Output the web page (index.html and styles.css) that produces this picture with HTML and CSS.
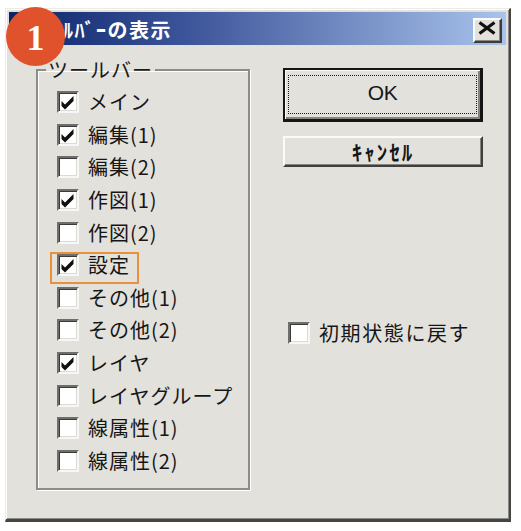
FILE: index.html
```html
<!DOCTYPE html>
<html lang="ja">
<head>
<meta charset="utf-8">
<title>ツールバーの表示</title>
<link rel="stylesheet" href="styles.css">
</head>
<body>
<div class="dialog">
  <div class="titlebar">
    <span class="title">ﾂｰﾙﾊﾞｰの表示</span>
    <div class="close"><svg width="25" height="21" viewBox="0 0 25 21"><path d="M4.5 2.5 L19.5 13.5 M19.5 2.5 L4.5 13.5" stroke="#111" stroke-width="3.2" fill="none"/></svg></div>
  </div>
  <div class="content">
    <fieldset class="group">
      <legend>ツールバー</legend>
      <div class="list">
        <div class="row"><span class="cb"><svg class="chk" viewBox="0 0 18 18"><polygon points="2.5,8 6,11.5 14.5,3 14.5,8 6,16.5 2.5,13"/></svg></span><span class="lbl">メイン</span></div>
        <div class="row"><span class="cb"><svg class="chk" viewBox="0 0 18 18"><polygon points="2.5,8 6,11.5 14.5,3 14.5,8 6,16.5 2.5,13"/></svg></span><span class="lbl">編集(1)</span></div>
        <div class="row"><span class="cb"></span><span class="lbl">編集(2)</span></div>
        <div class="row"><span class="cb"><svg class="chk" viewBox="0 0 18 18"><polygon points="2.5,8 6,11.5 14.5,3 14.5,8 6,16.5 2.5,13"/></svg></span><span class="lbl">作図(1)</span></div>
        <div class="row"><span class="cb"></span><span class="lbl">作図(2)</span></div>
        <div class="row"><span class="cb"><svg class="chk" viewBox="0 0 18 18"><polygon points="2.5,8 6,11.5 14.5,3 14.5,8 6,16.5 2.5,13"/></svg></span><span class="lbl">設定</span><span class="hl"></span></div>
        <div class="row"><span class="cb"></span><span class="lbl">その他(1)</span></div>
        <div class="row"><span class="cb"></span><span class="lbl">その他(2)</span></div>
        <div class="row"><span class="cb"><svg class="chk" viewBox="0 0 18 18"><polygon points="2.5,8 6,11.5 14.5,3 14.5,8 6,16.5 2.5,13"/></svg></span><span class="lbl">レイヤ</span></div>
        <div class="row"><span class="cb"></span><span class="lbl">レイヤグループ</span></div>
        <div class="row"><span class="cb"></span><span class="lbl">線属性(1)</span></div>
        <div class="row"><span class="cb"></span><span class="lbl">線属性(2)</span></div>
      </div>
    </fieldset>
    <div class="side">
      <div class="btn ok"><span class="focus">OK</span></div>
      <div class="btn cancel">ｷｬﾝｾﾙ</div>
      <div class="row reset"><span class="cb"></span><span class="lbl wide">初期状態に戻す</span></div>
    </div>
  </div>
  <div class="badge">1</div>
</div>
</body>
</html>
```

FILE: styles.css
```css
html, body {
  margin: 0;
  padding: 0;
  background: #ffffff;
}

body {
  font-family: "Noto Sans CJK JP", "Noto Sans", sans-serif;
  color: #161616;
}

.dialog {
  position: relative;
  margin: 8px 0 0 5px;
  width: 506px;
  height: 514px;
  box-sizing: border-box;
  background: #e3e1db;
  border-style: solid;
  border-width: 1px 2px 3px 1px;
  border-color: #ebeae5 #454543 #454543 #ebeae5;
  box-shadow: inset 1px 1px 0 #ffffff, inset -1px -1px 0 #8a8985;
  padding: 3px 3px 0 3px;
}

.titlebar {
  height: 33px;
  display: flex;
  align-items: center;
  justify-content: space-between;
  padding: 0 4px 0 31px;
  background: linear-gradient(to right, #0a246a 0%, #3b5398 35%, #a9c3ec 100%);
}

.title {
  color: #ffffff;
  font-weight: 700;
  font-size: 20px;
  letter-spacing: 1.5px;
  line-height: 1;
  margin-top: 2px;
}

.close {
  width: 29px;
  height: 25px;
  box-sizing: border-box;
  align-self: flex-end;
  margin-bottom: 2px;
  background: #e3e1db;
  border: 2px solid;
  border-color: #fbfbf9 #3c3c3a #3c3c3a #fbfbf9;
  box-shadow: inset -1px -1px 0 #8a8985;
}

.close svg {
  display: block;
}

.content {
  display: flex;
  align-items: flex-start;
  padding-left: 27px;
}

.group {
  margin: 15px 0 0 0;
  width: 214px;
  box-sizing: border-box;
  padding: 5.7px 0 10.6px 8px;
  border: 2px solid #8d8c88;
  box-shadow: 1px 1px 0 #ffffff, inset 1px 1px 0 #ffffff;
  min-inline-size: 0;
}

.group legend {
  padding: 0 2px;
  font-size: 20px;
  line-height: 20px;
  letter-spacing: 1px;
  color: #1a1a1a;
}

.list {
  padding-left: 11px;
}

.row {
  position: relative;
  display: flex;
  align-items: center;
  height: 32.64px;
}

.cb {
  flex: none;
  width: 22px;
  height: 22px;
  box-sizing: border-box;
  background: #ffffff;
  border: 2px solid;
  border-color: #6f6e6b #f7f7f5 #f7f7f5 #6f6e6b;
  box-shadow: inset 1px 1px 0 #3a3a38, inset -1px -1px 0 #dcdad4;
  margin-right: 9px;
}

.chk {
  display: block;
  width: 18px;
  height: 18px;
  fill: #101010;
}

.lbl {
  font-size: 20px;
  line-height: 1;
  letter-spacing: 1px;
  white-space: nowrap;
}

.lbl.wide {
  letter-spacing: 1.6px;
}

.hl {
  position: absolute;
  left: -7px;
  top: 2.8px;
  width: 89px;
  height: 32.6px;
  box-sizing: border-box;
  border: 2.7px solid #e8913a;
}

.side {
  margin-left: 33px;
  padding-top: 23px;
  display: flex;
  flex-direction: column;
}

.btn {
  width: 200px;
  box-sizing: border-box;
  background: #e3e1db;
  display: flex;
  align-items: center;
  justify-content: center;
}

.ok {
  height: 54px;
  border-style: solid;
  border-width: 2px 3px 3px 2px;
  border-color: #151515;
  box-shadow: inset 1px 1px 0 #fbfbf9, inset -2px -2px 0 #84837f;
  padding: 5px 3px 5px 3px;
  align-items: stretch;
}

.focus {
  flex: 1;
  border: 1.5px dotted #1a1a1a;
  display: flex;
  align-items: center;
  justify-content: center;
  font-family: "Liberation Sans", "Noto Sans", sans-serif;
  font-size: 21px;
  letter-spacing: -0.5px;
  padding-bottom: 4px;
}

.cancel {
  margin-top: 14px;
  height: 31px;
  border: 2px solid;
  border-color: #fbfbf9 #3f3f3d #3f3f3d #fbfbf9;
  box-shadow: inset -1px -1px 0 #858480;
  font-size: 21px;
  font-weight: 700;
  letter-spacing: 2px;
  line-height: 1;
}

.reset {
  margin-top: 155px;
  margin-left: 5px;
  height: 22px;
}

.badge {
  position: absolute;
  left: 0;
  top: -2px;
  width: 59px;
  height: 59px;
  border-radius: 50%;
  background: #e0522c;
  color: #ffffff;
  font-family: "Liberation Serif", serif;
  font-weight: 700;
  font-size: 36px;
  line-height: 1;
  display: flex;
  align-items: center;
  justify-content: center;
  padding-top: 3px;
  box-sizing: border-box;
}
```
